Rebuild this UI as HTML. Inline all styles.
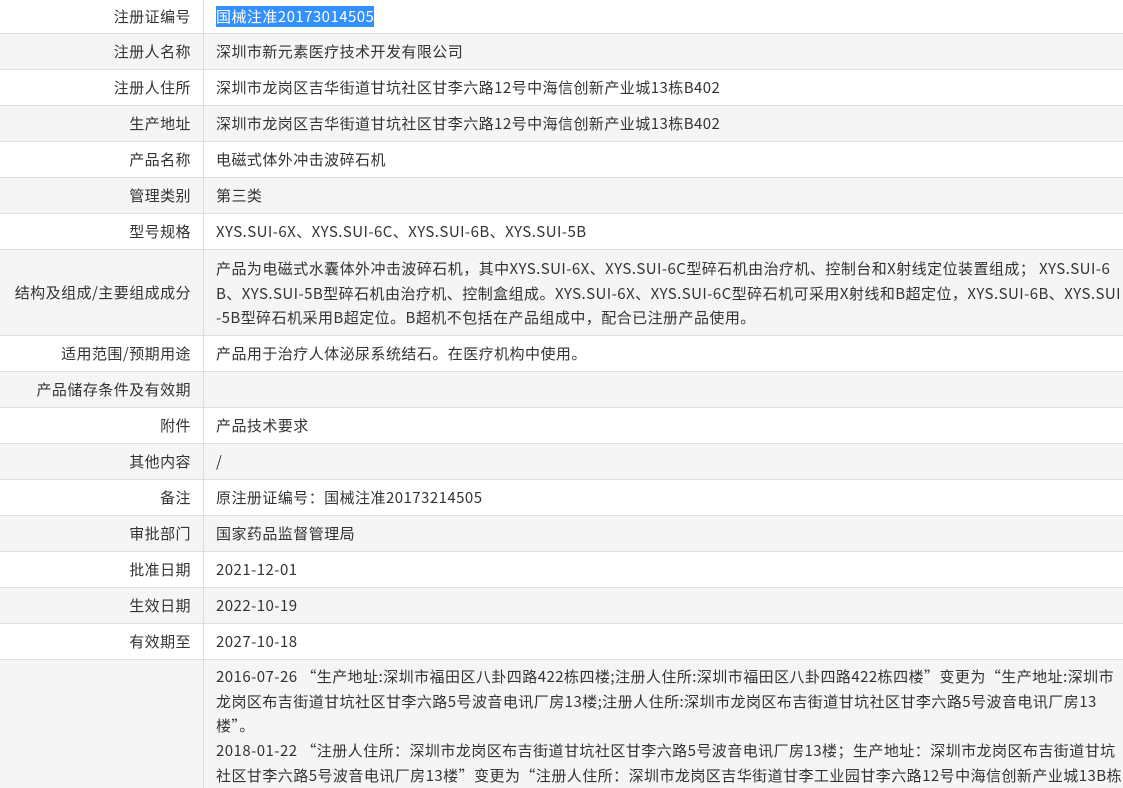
<!DOCTYPE html>
<html><head><meta charset="utf-8"><style>
*{margin:0;padding:0;box-sizing:border-box}
html,body{width:1123px;height:788px;overflow:hidden}
body{background:#fff;font-family:"Noto Sans CJK SC","Liberation Sans",sans-serif;font-size:15px;color:#333;letter-spacing:0.45px}
.r{display:flex;border-bottom:1px solid #ddd;height:36px}
.r.g{background:#f5f5f5}
.l{width:204px;flex:none;border-right:1px solid #ddd;text-align:right;padding:6px 12px 0 0;line-height:24px;color:#333;white-space:nowrap}
.v{flex:1;padding:6px 0 0 12px;line-height:24px;white-space:nowrap;overflow:hidden}
.sel{background:#3390ff;color:#fff}
</style></head><body>
<div class="r" style="height:34px"><div class="l" style="padding-top:5px">注册证编号</div><div class="v" style="padding-top:5px"><span class="sel">国械注准20173014505</span></div></div>
<div class="r g"><div class="l">注册人名称</div><div class="v">深圳市新元素医疗技术开发有限公司</div></div>
<div class="r"><div class="l">注册人住所</div><div class="v">深圳市龙岗区吉华街道甘坑社区甘李六路12号中海信创新产业城13栋B402</div></div>
<div class="r g"><div class="l">生产地址</div><div class="v">深圳市龙岗区吉华街道甘坑社区甘李六路12号中海信创新产业城13栋B402</div></div>
<div class="r"><div class="l">产品名称</div><div class="v">电磁式体外冲击波碎石机</div></div>
<div class="r g"><div class="l">管理类别</div><div class="v">第三类</div></div>
<div class="r"><div class="l">型号规格</div><div class="v">XYS.SUI-6X、XYS.SUI-6C、XYS.SUI-6B、XYS.SUI-5B</div></div>
<div class="r g" style="height:86px"><div class="l" style="padding-top:31px">结构及组成/主要组成成分</div><div class="v" style="padding-top:7px;line-height:24.5px">产品为电磁式水囊体外冲击波碎石机，其中XYS.SUI-6X、XYS.SUI-6C型碎石机由治疗机、控制台和X射线定位装置组成； XYS.SUI-6<br>B、XYS.SUI-5B型碎石机由治疗机、控制盒组成。XYS.SUI-6X、XYS.SUI-6C型碎石机可采用X射线和B超定位，XYS.SUI-6B、XYS.SUI<br>-5B型碎石机采用B超定位。B超机不包括在产品组成中，配合已注册产品使用。</div></div>
<div class="r"><div class="l">适用范围/预期用途</div><div class="v">产品用于治疗人体泌尿系统结石。在医疗机构中使用。</div></div>
<div class="r g"><div class="l">产品储存条件及有效期</div><div class="v"></div></div>
<div class="r"><div class="l">附件</div><div class="v">产品技术要求</div></div>
<div class="r g"><div class="l">其他内容</div><div class="v">/</div></div>
<div class="r"><div class="l">备注</div><div class="v">原注册证编号：国械注准20173214505</div></div>
<div class="r g"><div class="l">审批部门</div><div class="v">国家药品监督管理局</div></div>
<div class="r"><div class="l">批准日期</div><div class="v">2021-12-01</div></div>
<div class="r g"><div class="l">生效日期</div><div class="v">2022-10-19</div></div>
<div class="r"><div class="l">有效期至</div><div class="v">2027-10-18</div></div>
<div class="r g" style="height:128px;border-bottom:none"><div class="l"></div><div class="v" style="padding-top:5px;line-height:24.7px">2016-07-26 “生产地址:深圳市福田区八卦四路422栋四楼;注册人住所:深圳市福田区八卦四路422栋四楼”变更为“生产地址:深圳市<br>龙岗区布吉街道甘坑社区甘李六路5号波音电讯厂房13楼;注册人住所:深圳市龙岗区布吉街道甘坑社区甘李六路5号波音电讯厂房13<br>楼”。<br>2018-01-22 “注册人住所：深圳市龙岗区布吉街道甘坑社区甘李六路5号波音电讯厂房13楼；生产地址：深圳市龙岗区布吉街道甘坑<br>社区甘李六路5号波音电讯厂房13楼”变更为“注册人住所：深圳市龙岗区吉华街道甘李工业园甘李六路12号中海信创新产业城13B栋</div></div>
</body></html>
